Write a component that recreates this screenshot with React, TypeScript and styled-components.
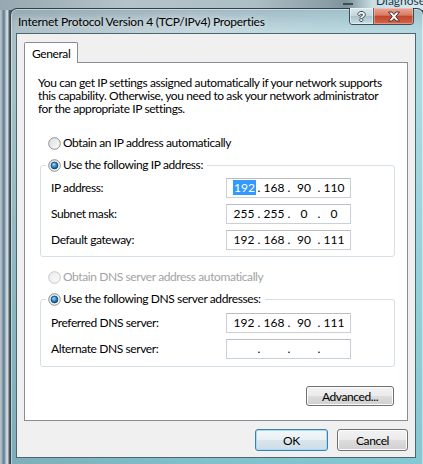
import React, { useId } from "react";
import styled, { createGlobalStyle } from "styled-components";

const Global = createGlobalStyle`
  html, body { margin: 0; padding: 0; }
  body {
    width: 423px;
    height: 464px;
    overflow: hidden;
    font-family: Lato, "Liberation Sans", sans-serif;
    font-size: 12px;
    letter-spacing: -0.4px;
    color: #000;
  }
  * { box-sizing: border-box; }
`;

const Desktop = styled.div`
  position: relative;
  width: 423px;
  height: 464px;
  overflow: hidden;
  padding: 8px 0 0 10px;
  background: linear-gradient(
    to right,
    #b8c4c9 0px,
    #a3b2b9 2px,
    #5f7f99 3px,
    #7d96a6 5px,
    #c5cfd3 6px,
    #d2dadd 8px,
    #4e5d64 9px,
    #4e5d64 10px
  );
`;

const BackTitle = styled.div`
  position: absolute;
  left: 0;
  top: 0;
  width: 423px;
  height: 10px;
  background: linear-gradient(
    to right,
    #97a8b0 0%,
    #b4c3c9 30%,
    #aebec6 60%,
    #8a9ca6 78%,
    #7f939d 82%,
    #c9dde3 88%,
    #d8e8ec 100%
  );
`;

const BackMin = styled.div`
  position: absolute;
  left: 343px;
  top: 3px;
  width: 10px;
  height: 2px;
  background: #3d4d55;
`;

const BackText = styled.div`
  position: absolute;
  left: 376px;
  top: -7px;
  font-size: 12px;
  letter-spacing: 0;
  color: #1d3a52;
  white-space: nowrap;
`;

const Window = styled.div`
  position: relative;
  width: 414px;
  display: flex;
  flex-direction: column;
  padding: 0 7px 8px 5px;
  border: 1px solid rgba(38, 52, 60, 0.9);
  border-radius: 7px 7px 0 0;
  box-shadow: inset 0 0 0 1px rgba(255, 255, 255, 0.45);
  background:
    linear-gradient(to right, rgba(120, 140, 150, 0.35), rgba(255, 255, 255, 0) 45%, rgba(140, 215, 225, 0.35)),
    linear-gradient(to bottom, #a3b8c2 0px, #c7d9df 22px, #b9dde3 80px, #93ccd5 300px, #7fc0cb 100%);
`;

const TitleBar = styled.div`
  height: 24px;
  display: flex;
  align-items: center;
  justify-content: space-between;
  padding-left: 2px;
  padding-right: 2px;
`;

const Title = styled.div`
  font-size: 12px;
  letter-spacing: -0.25px;
  color: #000;
  white-space: nowrap;
  text-shadow: 0 0 6px rgba(255, 255, 255, 0.9);
`;

const CaptionButtons = styled.div`
  align-self: flex-start;
  margin-top: -1px;
  height: 17px;
  display: flex;
  border: 1px solid rgba(40, 55, 65, 0.85);
  border-top: none;
  border-radius: 0 0 4px 4px;
  overflow: hidden;
`;

const HelpButton = styled.div`
  width: 24px;
  display: flex;
  align-items: center;
  justify-content: center;
  border-right: 1px solid rgba(40, 55, 65, 0.7);
  background: linear-gradient(#dbe8ec 0%, #c3d7dc 48%, #a9c3ca 52%, #c9dfe4 100%);
  box-shadow: inset 0 0 0 1px rgba(255, 255, 255, 0.5);
  font-family: "Liberation Sans", sans-serif;
  font-weight: bold;
  font-size: 13px;
  letter-spacing: 0;
  line-height: 1;
  color: #fff;
  text-shadow:
    -1px 0 #3a4a52, 1px 0 #3a4a52, 0 -1px #3a4a52, 0 1px #3a4a52;
`;

const CloseButton = styled.div`
  width: 39px;
  display: flex;
  align-items: center;
  justify-content: center;
  background: linear-gradient(#e9a898 0%, #d97a63 45%, #c2452c 52%, #d4664c 100%);
  box-shadow: inset 0 0 0 1px rgba(255, 220, 210, 0.4);
`;

const Client = styled.div`
  height: 425px;
  display: flex;
  flex-direction: column;
  padding: 8px 7px 0 7px;
  background: #f0f0f0;
  border: 1px solid #4c6670;
`;

const TabStrip = styled.div`
  display: flex;
`;

const Tab = styled.div`
  position: relative;
  z-index: 1;
  width: 54px;
  height: 21px;
  margin-bottom: -1px;
  padding-left: 7px;
  display: flex;
  align-items: center;
  background: #fff;
  border: 1px solid #898c95;
  border-bottom: none;
  border-radius: 2px 2px 0 0;
`;

const Panel = styled.div`
  display: flex;
  flex-direction: column;
  padding: 13px 12px 14px 13px;
  background: #fff;
  border: 1px solid #898c95;
`;

const Intro = styled.div`
  line-height: 13px;
  white-space: nowrap;
`;

const RadioRow = styled.div<{ $mt: number; $disabled?: boolean }>`
  display: flex;
  align-items: center;
  gap: 2px;
  height: 14px;
  margin-top: ${(p) => p.$mt}px;
  padding-left: 10px;
  line-height: 14px;
  color: ${(p) => (p.$disabled ? "#a3a3a3" : "#000")};
`;

const Group = styled.fieldset<{ $mt: number }>`
  margin: ${(p) => p.$mt}px 0 0 2px;
  padding: 0;
  min-width: 0;
  border: 1px solid #d5dfe5;
  border-radius: 3px;
`;

const Legend = styled.legend`
  margin-left: 5px;
  padding: 0 4px 0 2px;
  height: 14px;
  line-height: 14px;
  display: flex;
  align-items: center;
  gap: 2px;
`;

const Rows = styled.div<{ $pad: number }>`
  display: grid;
  grid-template-columns: 1fr 125px;
  row-gap: 6px;
  align-items: center;
  padding: ${(p) => p.$pad}px 43px ${(p) => p.$pad}px 10px;
`;

const Label = styled.div`
  line-height: 14px;
`;

const IpField = styled.div`
  height: 20px;
  display: flex;
  align-items: center;
  padding-left: 6px;
  background: #fff;
  border: 1px solid #ccd0d6;
  border-top-color: #b9bdc4;
  letter-spacing: 0;
`;

const Octet = styled.div`
  width: 22px;
  text-align: center;
  line-height: 14px;
  white-space: nowrap;
`;

const Selected = styled.span`
  background: #3399ff;
  color: #fff;
  padding: 0 1px;
`;

const Dot = styled.div`
  width: 8px;
  text-align: center;
  line-height: 14px;
`;

const AdvancedRow = styled.div`
  display: flex;
  justify-content: flex-end;
  margin-top: 19px;
  padding-right: 1px;
`;

const Button = styled.div<{ $w: number; $h: number; $default?: boolean }>`
  width: ${(p) => p.$w}px;
  height: ${(p) => p.$h}px;
  display: flex;
  align-items: center;
  justify-content: center;
  border-radius: 3px;
  border: 1px solid ${(p) => (p.$default ? "#3c7fb1" : "#707070")};
  box-shadow: inset 0 0 0 1px ${(p) => (p.$default ? "#a8dcf6" : "#fcfcfc")};
  background: ${(p) =>
    p.$default
      ? "linear-gradient(#f2f7fa 0%, #e8f0f5 50%, #d9e5ec 50%, #cddde6 100%)"
      : "linear-gradient(#f2f2f2 0%, #ebebeb 50%, #dddddd 50%, #cfcfcf 100%)"};
`;

const ButtonRow = styled.div`
  display: flex;
  justify-content: flex-end;
  gap: 9px;
  margin-top: 8px;
`;

function Radio({ checked, disabled }: { checked?: boolean; disabled?: boolean }) {
  const id = useId().replace(/:/g, "");
  return (
    <svg width="13" height="13" viewBox="0 0 13 13" style={{ flex: "none" }}>
      <defs>
        <linearGradient id={`b${id}`} x1="0" y1="0" x2="1" y2="1">
          <stop offset="0" stopColor={disabled ? "#ececec" : "#dcdcdc"} />
          <stop offset="1" stopColor={disabled ? "#fafafa" : "#fefefe"} />
        </linearGradient>
        <radialGradient id={`d${id}`} cx="0.4" cy="0.35" r="0.75">
          <stop offset="0" stopColor="#9be0fb" />
          <stop offset="0.45" stopColor="#2f8ed0" />
          <stop offset="1" stopColor="#0a3d6b" />
        </radialGradient>
      </defs>
      <circle
        cx="6.5"
        cy="6.5"
        r="5.8"
        fill={`url(#b${id})`}
        stroke={disabled ? "#c6c6c6" : "#8c8f91"}
        strokeWidth="1"
      />
      {checked && (
        <circle cx="6.5" cy="6.5" r="3.4" fill={`url(#d${id})`} stroke="#123e62" strokeWidth="0.8" />
      )}
    </svg>
  );
}

function CloseGlyph() {
  return (
    <svg width="14" height="11" viewBox="0 0 14 11">
      <path
        d="M1.5 1 H5 L7 3.4 L9 1 H12.5 L8.8 5.5 L12.5 10 H9 L7 7.6 L5 10 H1.5 L5.2 5.5 Z"
        fill="#fff"
        stroke="#4a3030"
        strokeWidth="1"
        strokeLinejoin="round"
      />
    </svg>
  );
}

function Ip({ parts, selectFirst }: { parts: string[]; selectFirst?: boolean }) {
  return (
    <IpField>
      {parts.map((p, i) => (
        <React.Fragment key={i}>
          <Octet>{i === 0 && selectFirst ? <Selected>{p}</Selected> : p}</Octet>
          {i < 3 && <Dot>.</Dot>}
        </React.Fragment>
      ))}
    </IpField>
  );
}

export default function App() {
  return (
    <>
      <Global />
      <Desktop>
        <BackTitle>
          <BackMin />
          <BackText>Diagnose</BackText>
        </BackTitle>
        <Window>
          <TitleBar>
            <Title>Internet Protocol Version 4 (TCP/IPv4) Properties</Title>
            <CaptionButtons>
              <HelpButton>?</HelpButton>
              <CloseButton>
                <CloseGlyph />
              </CloseButton>
            </CaptionButtons>
          </TitleBar>
          <Client>
            <TabStrip>
              <Tab>General</Tab>
            </TabStrip>
            <Panel>
              <Intro>
                You can get IP settings assigned automatically if your network supports
                <br />
                this capability. Otherwise, you need to ask your network administrator
                <br />
                for the appropriate IP settings.
              </Intro>
              <RadioRow $mt={21}>
                <Radio />
                <span>Obtain an IP address automatically</span>
              </RadioRow>
              <Group $mt={8}>
                <Legend>
                  <Radio checked />
                  <span>Use the following IP address:</span>
                </Legend>
                <Rows $pad={6}>
                  <Label>IP address:</Label>
                  <Ip parts={["192", "168", "90", "110"]} selectFirst />
                  <Label>Subnet mask:</Label>
                  <Ip parts={["255", "255", "0", "0"]} />
                  <Label>Default gateway:</Label>
                  <Ip parts={["192", "168", "90", "111"]} />
                </Rows>
              </Group>
              <RadioRow $mt={13} $disabled>
                <Radio disabled />
                <span>Obtain DNS server address automatically</span>
              </RadioRow>
              <Group $mt={8}>
                <Legend>
                  <Radio checked />
                  <span>Use the following DNS server addresses:</span>
                </Legend>
                <Rows $pad={7}>
                  <Label>Preferred DNS server:</Label>
                  <Ip parts={["192", "168", "90", "111"]} />
                  <Label>Alternate DNS server:</Label>
                  <Ip parts={["", "", "", ""]} />
                </Rows>
              </Group>
              <AdvancedRow>
                <Button $w={88} $h={20}>
                  Advanced...
                </Button>
              </AdvancedRow>
            </Panel>
            <ButtonRow>
              <Button $w={73} $h={22} $default>
                OK
              </Button>
              <Button $w={71} $h={22}>
                Cancel
              </Button>
            </ButtonRow>
          </Client>
        </Window>
      </Desktop>
    </>
  );
}
